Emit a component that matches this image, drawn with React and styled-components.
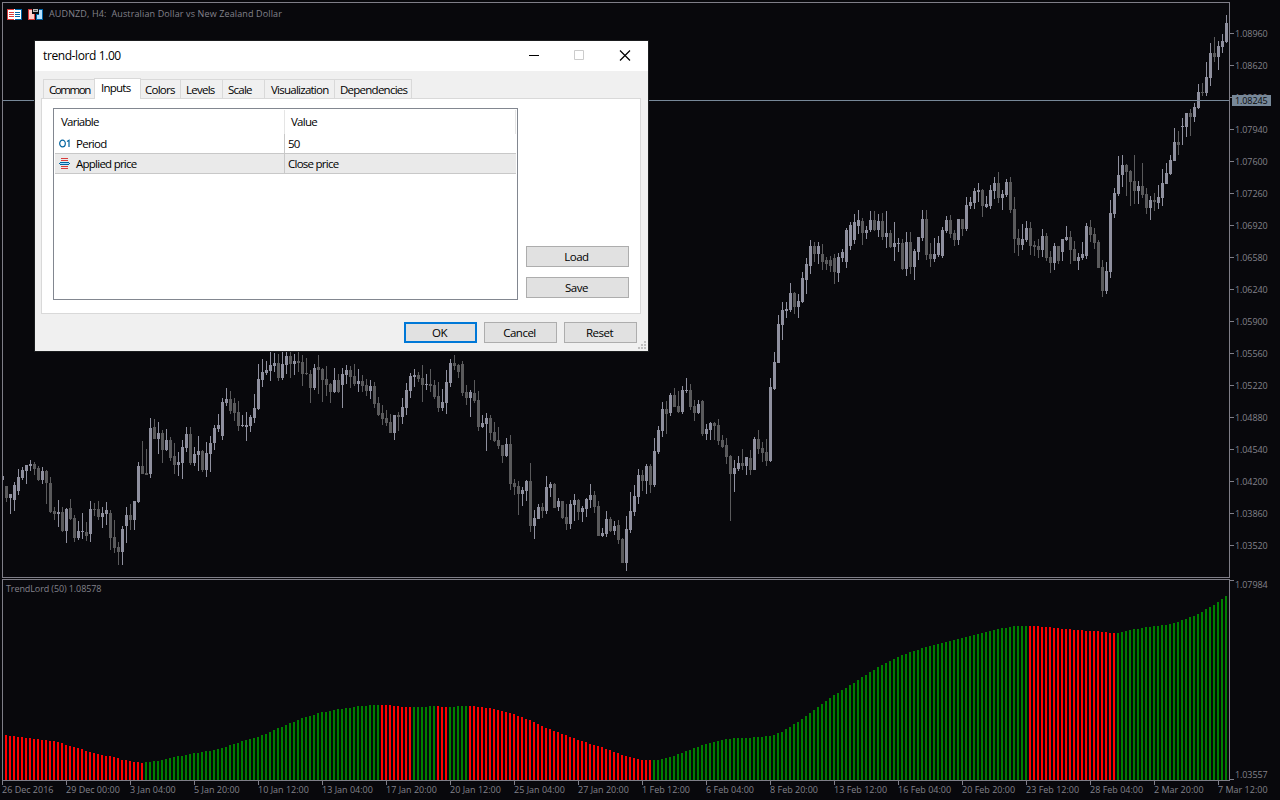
import React from "react"
import styled, { createGlobalStyle, ThemeProvider } from "styled-components"

const theme = {
  colors: {
    background: "#08080c",
    frame: "#7f7e88",
    text: "#83828b",
    up: "#8f909f",
    down: "#5a5a5c",
    bid: "#778899",
    rise: "#008000",
    fall: "#ff0000",
    face: "#f0f0f0",
    edge: "#d9d9d9"
  },
  font: `"Open Sans", "Noto Sans", sans-serif`
}

const GlobalStyle = createGlobalStyle`
  body {
    margin: 0;
    background: #08080c;
    overflow: hidden;
  }
  * {
    box-sizing: border-box;
  }
`

// high top bottom low, "u" closes up and "d" closes down
const candles = `
476 476 480 480 u|486 486 498 502 d|494 494 498 514 u|482 485 500 511 u|469 477 491 495 u|467 470 478 480 u
465 465 471 484 u|460 464 466 471 u|462 464 469 475 d|466 468 480 481 d|467 471 480 484 u|470 471 483 504 d
477 483 512 513 d|507 511 514 520 d|500 512 514 527 u|507 512 531 532 d|508 509 531 543 u|499 508 519 520 d
515 518 538 542 d|521 531 538 540 u|513 531 532 539 u|522 532 536 541 d|501 509 534 542 u|503 509 510 516 d
501 509 517 520 d|507 513 517 528 u|502 510 514 525 u|510 513 538 550 d|520 537 548 553 d|542 547 552 565 d
526 529 552 565 u|507 515 526 543 u|504 515 520 530 d|501 501 520 530 u|462 466 502 503 u|441 466 474 474 d
449 473 475 475 d|418 428 474 478 u|419 427 439 439 d|422 433 439 454 u|430 433 450 463 d|429 440 450 451 u
437 440 458 461 d|443 456 465 474 d|452 462 465 476 u|440 447 463 479 u|427 434 448 452 u|427 434 463 465 d
447 454 463 466 u|436 451 455 471 u|450 451 470 472 d|442 453 470 477 u|436 443 454 472 u|425 428 443 450 u
414 425 429 432 u|398 402 436 440 u|388 399 403 406 u|391 399 411 414 d|398 403 413 421 d|401 412 426 431 d
415 425 426 427 u|412 425 427 441 u|415 417 426 432 u|394 408 418 423 u|364 379 409 410 u|359 372 380 387 u
361 370 373 375 u|345 365 371 381 u|353 363 366 372 u|354 363 378 381 d|345 364 378 380 u|348 356 365 374 u
348 356 364 378 d|354 361 364 375 u|350 361 363 372 d|355 362 374 386 d|358 373 374 375 d|370 374 388 403 d
364 368 388 390 u|355 367 370 394 d|368 369 380 402 d|366 379 385 396 d|383 384 392 403 d|368 380 392 393 u
374 380 392 393 d|368 374 385 408 u|365 370 375 384 u|366 370 377 388 d|364 376 384 386 d|369 381 384 392 u
375 381 386 392 d|379 385 391 396 d|380 386 391 399 u|382 386 404 408 d|397 403 415 416 d|405 413 419 425 d
410 418 423 426 d|414 422 433 433 d|415 415 433 440 u|412 415 417 431 d|398 407 417 424 u|383 390 408 415 u
373 376 391 398 u|369 375 377 387 u|372 375 379 382 d|365 378 385 402 d|374 384 385 390 u|369 384 386 392 d
380 385 397 399 d|382 396 408 412 d|389 402 408 411 u|370 382 403 414 u|359 363 383 387 u|355 363 366 370 d
364 365 372 378 d|361 364 393 396 d|385 392 398 405 d|390 392 398 417 u|380 393 401 403 d|391 400 427 431 d
415 423 427 428 u|413 418 424 451 u|415 418 433 440 d|422 432 441 442 d|427 440 446 449 d|445 445 456 463 d
438 444 456 457 u|435 444 484 490 d|479 483 487 495 d|481 486 494 515 d|487 490 494 506 u|480 481 491 501 u
463 481 526 532 d|510 518 526 539 u|504 507 519 519 u|503 507 511 518 d|476 487 511 514 u|482 484 488 497 u
483 484 508 508 d|498 501 507 511 u|501 501 518 519 d|504 517 524 530 d|500 504 524 529 u|494 500 505 521 u
499 500 512 520 d|506 508 512 522 u|498 499 509 517 u|484 495 500 508 u|491 495 507 513 d|501 506 536 536 d
528 533 536 537 u|511 519 534 537 u|517 519 531 532 d|521 526 531 535 u|520 525 540 544 d|538 539 563 563 d
516 529 563 571 u|492 511 530 533 u|485 496 512 516 u|469 475 497 504 u|470 475 481 491 d|464 466 481 494 u
464 466 485 493 d|438 451 485 487 u|426 430 452 454 u|402 409 431 437 u|401 409 414 434 d|393 395 413 416 u
388 395 407 407 d|391 406 412 413 d|386 390 412 414 u|378 390 391 393 u|384 390 407 410 d|400 406 413 421 d
400 404 413 414 u|400 401 434 436 d|424 429 434 440 u|422 423 430 440 u|422 423 426 440 d|419 425 441 445 d
435 440 447 448 d|438 445 457 464 d|455 456 474 521 d|460 468 474 492 u|456 463 469 471 u|449 463 466 470 d
457 457 466 475 u|450 458 470 475 d|437 439 470 470 u|430 439 449 454 d|442 448 453 462 d|439 452 461 466 d
378 387 461 462 u|352 362 389 390 u|315 324 363 363 u|302 310 325 340 u|302 309 311 318 u|283 293 310 312 u
292 293 307 314 d|294 301 307 318 u|272 278 302 303 u|258 264 280 294 u|240 246 266 274 u|242 246 254 262 d
242 246 254 264 u|244 254 262 270 d|257 260 264 270 d|256 260 266 272 d|254 258 272 284 d|253 257 273 282 u
249 252 258 262 u|228 230 262 268 u|222 225 246 250 u|214 222 240 244 u|210 220 226 234 u|218 221 233 245 d
226 230 233 239 u|211 220 230 232 u|211 220 230 231 d|214 221 230 237 u|213 221 237 240 d|211 233 237 248 u
230 233 247 248 d|222 243 247 261 u|238 243 244 252 u|239 243 269 270 d|232 242 269 276 u|232 242 267 274 d
249 251 267 280 u|237 237 252 260 u|210 219 238 241 u|210 219 255 260 d|243 254 259 267 d|238 254 259 262 u
236 243 255 257 u|227 230 256 258 u|216 220 231 233 u|215 220 234 238 d|230 233 240 246 d|219 219 240 245 u
219 219 229 236 d|197 205 229 231 u|197 202 206 209 u|188 191 203 209 u|183 190 192 202 u|189 190 206 217 d
196 204 207 208 u|185 190 206 209 u|177 183 191 199 u|172 183 198 203 d|190 194 198 210 u|179 182 195 197 u
177 182 210 213 d|197 209 239 253 d|229 238 245 256 d|224 239 245 250 u|221 228 240 242 u|222 228 246 255 d
241 245 247 256 d|239 246 250 258 d|229 236 250 257 u|233 236 258 261 d|251 257 263 273 d|243 246 263 270 u
246 246 261 264 d|239 239 252 261 u|226 237 240 241 u|231 237 250 264 d|241 249 261 261 d|253 257 261 270 u
242 254 258 260 u|223 226 256 259 u|220 227 235 242 d|228 234 243 249 d|240 242 268 268 d|260 267 291 297 d
262 271 291 294 u|200 213 272 278 u|188 193 214 218 u|156 175 194 196 u|155 165 175 187 u|164 165 172 196 d
170 171 182 206 d|155 181 191 204 d|181 186 191 204 u|163 186 195 198 d|188 194 208 214 d|196 200 208 220 u
193 200 202 211 d|185 197 203 209 u|169 183 198 206 u|163 173 184 184 u|155 160 174 175 u|128 142 161 161 u
131 142 145 155 d|118 126 127 145 u|113 113 127 137 u|109 113 117 136 d|103 107 117 122 u|84 92 108 109 u
83 92 93 96 d|62 77 93 96 u|43 53 78 86 u|37 53 57 62 d|41 46 57 70 u|34 41 47 53 u|15 23 42 43 u`
  .trim()
  .split(/[|\n]/)
  .map(row => {
    const [high, top, bottom, low, dir] = row.split(" ")
    return { high: +high, top: +top, bottom: +bottom, low: +low, up: dir === "u" }
  })

// runs of the trend histogram, each value is the top of one bar
const trend = [
  ["fall", "735 736 736 737 737 738 738 739 739 740 740 741 741 742 743 745 746 747 748 749 751 752 753 754 755 756 756 757 758 760 760 761 762 762 763"],
  ["rise", "762 762 761 761 760 759 758 757 756 756 755 754 753 753 752 751 751 750 749 748 747 745 744 743 741 740 739 738 737 735 734 732 730 728 727 725 723 722 720 718 717 716 715 713 712 712 711 710 709 709 708 708 707 706 706 706 705 705 705"],
  ["fall", "705 705 705 706 706 707 707 707"],
  ["rise", "707 707 707 707 706 706"],
  ["fall", "706 707 707"],
  ["rise", "707 707 706 706 706"],
  ["fall", "706 706 707 707 708 708 709 710 711 712 713 714 716 717 719 720 722 724 726 728 729 731 732 734 735 737 738 740 741 742 744 745 746 747 749 750 752 753 755 756 757 758 759 760 760 760"],
  ["rise", "760 760 759 758 757 756 754 753 751 750 748 747 745 744 743 742 741 740 739 739 738 738 738 738 738 737 737 737 736 736 735 733 732 729 727 724 722 719 716 713 710 707 704 701 698 695 693 690 688 685 683 680 677 675 672 670 667 665 663 661 659 657 655 654 652 651 650 648 647 646 645 644 643 642 641 640 639 638 637 636 635 634 633 632 631 630 629 628 628 627 626 626 626 626"],
  ["fall", "626 626 626 627 627 627 628 628 629 629 629 630 630 630 631 631 631 631 632 632 633 633"],
  ["rise", "633 632 631 630 629 629 628 627 627 626 626 625 625 624 623 622 620 619 617 616 614 612 609 607 605 602 599 596"]
].flatMap(([dir, tops]) => tops.split(" ").map(top => ({ dir, top: +top })))

const prices = Array.from({ length: 17 }, (_, i) => (1.0896 - i * 0.0034).toFixed(5))

const times = [
  "26 Dec 2016",
  "29 Dec 00:00",
  "3 Jan 04:00",
  "5 Jan 20:00",
  "10 Jan 12:00",
  "13 Jan 04:00",
  "17 Jan 20:00",
  "20 Jan 12:00",
  "25 Jan 04:00",
  "27 Jan 20:00",
  "1 Feb 12:00",
  "6 Feb 04:00",
  "8 Feb 20:00",
  "13 Feb 12:00",
  "16 Feb 04:00",
  "20 Feb 20:00",
  "23 Feb 12:00",
  "28 Feb 04:00",
  "2 Mar 20:00",
  "7 Mar 12:00"
]

const Terminal = styled.main`
  position: relative;
  display: grid;
  grid-template-columns: 1230px 50px;
  grid-template-rows: 579px 202px 19px;
  width: 1280px;
  height: 800px;
  overflow: hidden;
  background: ${({ theme }) => theme.colors.background};
  color: ${({ theme }) => theme.colors.text};
  font: 9px/12px ${({ theme }) => theme.font};
  white-space: pre;
`

const Pane = styled.section`
  position: relative;
  svg.plot {
    display: block;
  }
`

const PaneTitle = styled.header`
  position: absolute;
  top: ${({ $top }) => $top}px;
  left: ${({ $left }) => $left}px;
  display: flex;
  align-items: center;
  letter-spacing: ${({ $spacing }) => $spacing || 0}px;
  svg {
    margin-right: 6px;
  }
`

const PriceAxis = styled.aside`
  position: relative;
  padding-top: 17px;
`

const PriceTick = styled.div`
  display: flex;
  align-items: center;
  height: 32px;
  padding-top: 1px;
  letter-spacing: -0.1px;
  &::before {
    content: "";
    width: 4px;
    height: 1px;
    margin: -1px 1px 0 0;
    background: ${({ theme }) => theme.colors.frame};
  }
`

const Bid = styled.div`
  position: absolute;
  top: 95px;
  left: 2px;
  width: 39px;
  height: 11px;
  padding-left: 3px;
  line-height: 12px;
  letter-spacing: -0.1px;
  color: #08080c;
  background: ${({ theme }) => theme.colors.bid};
`

const RangeAxis = styled.aside`
  display: flex;
  flex-direction: column;
  justify-content: space-between;
  padding: 1px 0;
  letter-spacing: -0.1px;
  span {
    padding: 0 0 0 5px;
    height: 11px;
    line-height: 9px;
    background: linear-gradient(#7f7e88, #7f7e88) no-repeat 0 0 / 4px 1px;
  }
  span:last-child {
    line-height: 11px;
    background-position: 0 100%;
  }
`

const TimeAxis = styled.footer`
  grid-column: 1 / 3;
  display: flex;
  padding-left: 2px;
`

const TimeTick = styled.div`
  flex: 0 0 64px;
  line-height: 12px;
  text-indent: -1px;
  &::before {
    content: "";
    display: block;
    width: 1px;
    height: 4px;
    margin-bottom: -1px;
    background: ${({ theme }) => theme.colors.frame};
  }
`

const Dialog = styled.section`
  position: absolute;
  top: 41px;
  left: 35px;
  display: flex;
  flex-direction: column;
  width: 613px;
  height: 310px;
  background: ${({ theme }) => theme.colors.face};
  box-shadow: 0 0 0 1px #1b1d1f;
  color: #000;
  font-size: 11.5px;
  line-height: 18px;
  letter-spacing: -0.75px;
`

const TitleBar = styled.header`
  display: flex;
  align-items: center;
  justify-content: space-between;
  height: 30px;
  padding: 0 17px 0 8px;
  background: #fff;
  font-size: 12px;
  letter-spacing: -0.4px;
  svg {
    display: block;
    margin-top: -1px;
  }
`

const Tabs = styled.nav`
  display: flex;
  align-items: flex-end;
  height: 28px;
  padding-left: 8px;
  margin-bottom: -1px;
  z-index: 1;
`

const Tab = styled.div`
  width: ${({ $width }) => $width}px;
  height: ${({ $active }) => ($active ? 21 : 19)}px;
  margin-bottom: ${({ $active }) => ($active ? 0 : 1)}px;
  padding: ${({ $active }) => ($active ? 0 : 1)}px 0 0 ${({ $pad }) => $pad}px;
  border: 1px solid ${({ theme }) => theme.colors.edge};
  border-width: 1px 1px 0 0;
  background: ${({ $active }) => ($active ? "#fff" : "transparent")};
  &:first-child {
    border-width: 1px 0 0 1px;
    letter-spacing: -1.4px;
  }
  ${({ $active }) => $active && "border-left-width: 1px;"}
`

const Page = styled.div`
  display: flex;
  gap: 8px;
  height: 216px;
  margin: 0 7px 0 6px;
  padding: 9px 0 0 11px;
  border: 1px solid ${({ theme }) => theme.colors.edge};
  background: #fff;
`

const Inputs = styled.div`
  width: 465px;
  height: 192px;
  padding: 1px 0 0 1px;
  border: 1px solid #828790;
`

const HeaderRow = styled.div`
  display: flex;
  height: 24px;
  margin-right: 1px;
  line-height: 23px;
  span {
    width: 230px;
    padding-left: 6px;
    border-right: 1px solid #e5e5e5;
  }
  span + span {
    width: 231px;
  }
`

const InputRow = styled.div`
  display: flex;
  height: 20px;
  margin-right: 1px;
  line-height: 19px;
  border-bottom: 1px solid #c8c8c8;
  background: ${({ $selected }) => ($selected ? "#eaeaea" : "#fff")};
`

const InputName = styled.div`
  display: flex;
  gap: 5px;
  width: 230px;
  padding-left: 4px;
  border-right: 1px solid #c8c8c8;
  svg {
    align-self: center;
  }
`

const InputValue = styled.div`
  padding-left: 3px;
`

const Side = styled.div`
  display: flex;
  flex-direction: column;
  justify-content: flex-end;
  gap: 10px;
  padding-bottom: 15px;
`

const Button = styled.button`
  width: ${({ $wide }) => ($wide ? 103 : 73)}px;
  height: 21px;
  padding: ${({ $primary }) => ($primary ? 0 : 1)}px 2px 0 0;
  border: ${({ $primary }) => ($primary ? "2px solid #0078d7" : "1px solid #adadad")};
  background: #e1e1e1;
  color: #000;
  font: inherit;
  letter-spacing: -0.5px;
  line-height: ${({ $primary }) => ($primary ? 17 : 18)}px;
`

const Actions = styled.footer`
  display: flex;
  justify-content: flex-end;
  gap: 7px;
  padding: 8px 11px 0 0;
`

const Grip = styled.svg`
  position: absolute;
  right: 2px;
  bottom: 2px;
`

const DepthIcon = () => (
  <svg width="15" height="11" shapeRendering="crispEdges">
    <path fill="#fff" d="M0 0h15v11H0z" />
    <path fill="#d83b3b" d="M0 0h7v1H1v9h6v1H0zM2 3h5v1H2zM2 5h5v1H2zM2 7h5v1H2z" />
    <path fill="#0063a5" d="M8 0h7v11H8v-1h6V1H8zM8 3h5v1H8zM8 5h5v1H8zM8 7h5v1H8z" />
  </svg>
)

const TradeIcon = () => (
  <svg width="15" height="11" shapeRendering="crispEdges">
    <path fill="#d83b3b" d="M0 0h4v5h3v6H0z" />
    <path fill="#ffcfcb" d="M1 1h3v4h2v5H1z" />
    <path fill="#0063a5" d="M11 0h4v11H8V5h3z" />
    <path fill="#b5e0ff" d="M11 1h3v9H9V6h2z" />
    <path fill="#08080c" d="M4 0h7v3H9v1H6V3H4z" />
    <path fill="#b8b8b8" d="M5 0h5v3H5z" />
    <path fill="#555" d="M6 1h3v1H6z" />
  </svg>
)

const IntegerIcon = () => (
  <svg width="12" height="9" fill="none" stroke="#00639f" strokeWidth="1.2">
    <ellipse cx="3.5" cy="4.5" rx="2.8" ry="3.3" />
    <path d="M8 2.4L10 1.2V8" />
  </svg>
)

const EnumIcon = () => (
  <svg width="12" height="11" shapeRendering="crispEdges">
    <path fill="#d83b3b" d="M2 0h7v1H2zM2 2h7v1H2zM2 8h7v1H2zM2 10h7v1H2z" />
    <path fill="#00639f" d="M1 4h9v1h1v1h-1v1H1V6H0V5h1z" />
    <path fill="#a5dcff" d="M1 5h9v1H1z" />
  </svg>
)

const WindowControls = () => (
  <svg width="102" height="11" fill="none">
    <path stroke="#000" d="M0 5.5h10" />
    <path stroke="#ccc" d="M45.5.5h9v9h-9z" />
    <path stroke="#000" strokeWidth="1.2" d="M91 .5l10 10M101 .5l-10 10" />
  </svg>
)

const PriceChart = () => (
  <svg className="plot" width="1230" height="579" shapeRendering="crispEdges">
    {candles.map(({ high, top, bottom, low, up }, i) => (
      <g key={i} fill={up ? theme.colors.up : theme.colors.down}>
        <rect x={2 + i * 4} y={high} width="1" height={low - high} />
        <rect x={1 + i * 4} y={top} width="3" height={bottom - top} />
      </g>
    ))}
    <path fill={theme.colors.background} d="M0 400h2v100H0z" />
    <path fill={theme.colors.bid} d="M3 100h1226v1H3z" />
    <path fill="none" stroke={theme.colors.frame} d="M2.5 2.5h1227v575H2.5z" />
  </svg>
)

const TrendChart = () => (
  <svg className="plot" width="1230" height="202" viewBox="0 579 1230 202" shapeRendering="crispEdges">
    {trend.map(({ dir, top }, i) => (
      <rect key={i} x={5 + i * 4} y={top} width="2" height={780 - top} fill={theme.colors[dir]} />
    ))}
    <path fill="none" stroke={theme.colors.frame} d="M2.5 579.5h1227v201H2.5z" />
  </svg>
)

const tabs = [
  { name: "Common", width: 51, pad: 5 },
  { name: "Inputs", width: 47, pad: 6, active: true },
  { name: "Colors", width: 40, pad: 4 },
  { name: "Levels", width: 42, pad: 5 },
  { name: "Scale", width: 42, pad: 5 },
  { name: "Visualization", width: 70, pad: 6 },
  { name: "Dependencies", width: 77, pad: 5 }
]

const IndicatorDialog = () => (
  <Dialog>
    <TitleBar>
      trend-lord 1.00
      <WindowControls />
    </TitleBar>
    <Tabs>
      {tabs.map(({ name, width, pad, active }) => (
        <Tab key={name} $width={width} $pad={pad} $active={active}>
          {name}
        </Tab>
      ))}
    </Tabs>
    <Page>
      <Inputs>
        <HeaderRow>
          <span>Variable</span>
          <span>Value</span>
        </HeaderRow>
        <InputRow>
          <InputName>
            <IntegerIcon />
            Period
          </InputName>
          <InputValue>50</InputValue>
        </InputRow>
        <InputRow $selected>
          <InputName>
            <EnumIcon />
            Applied price
          </InputName>
          <InputValue>Close price</InputValue>
        </InputRow>
      </Inputs>
      <Side>
        <Button $wide>Load</Button>
        <Button $wide>Save</Button>
      </Side>
    </Page>
    <Actions>
      <Button $primary>OK</Button>
      <Button>Cancel</Button>
      <Button>Reset</Button>
    </Actions>
    <Grip width="8" height="8" fill="#bfbfbf" shapeRendering="crispEdges">
      <path d="M6 0h2v2H6zM3 3h2v2H3zM6 3h2v2H6zM0 6h2v2H0zM3 6h2v2H3zM6 6h2v2H6z" />
    </Grip>
  </Dialog>
)

const App = () => (
  <ThemeProvider theme={theme}>
    <GlobalStyle />
    <Terminal>
      <Pane>
        <PriceChart />
        <PaneTitle $top={8} $left={7} $spacing={0.13}>
          <DepthIcon />
          <TradeIcon />
          AUDNZD, H4:  Australian Dollar vs New Zealand Dollar
        </PaneTitle>
      </Pane>
      <PriceAxis>
        {prices.map(price => (
          <PriceTick key={price}>{price}</PriceTick>
        ))}
        <Bid>1.08245</Bid>
      </PriceAxis>
      <Pane>
        <TrendChart />
        <PaneTitle $top={4} $left={6} $spacing={-0.1}>
          TrendLord (50) 1.08578
        </PaneTitle>
      </Pane>
      <RangeAxis>
        <span>1.07984</span>
        <span>1.03557</span>
      </RangeAxis>
      <TimeAxis>
        {times.map(time => (
          <TimeTick key={time}>{time}</TimeTick>
        ))}
      </TimeAxis>
      <IndicatorDialog />
    </Terminal>
  </ThemeProvider>
)

export default App
